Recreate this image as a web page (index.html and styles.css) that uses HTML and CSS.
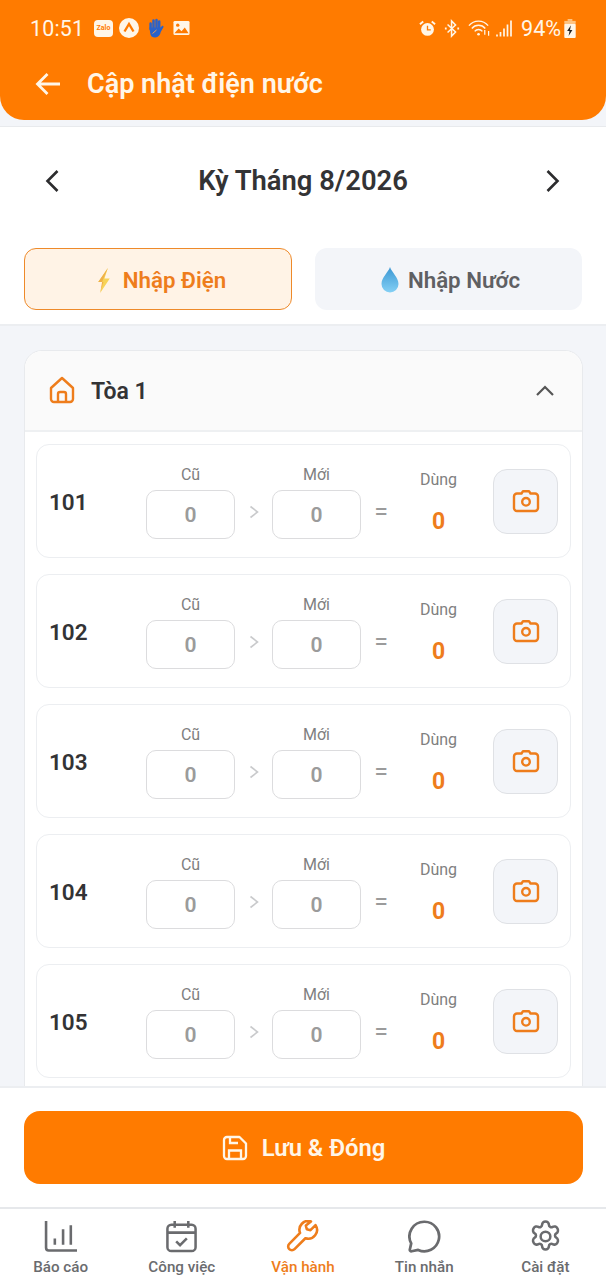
FILE: index.html
```html
<!DOCTYPE html>
<html lang="vi">
<head>
<meta charset="utf-8">
<title>Cập nhật điện nước</title>
<link rel="stylesheet" href="styles.css">
</head>
<body>
<svg class="defs" width="0" height="0" aria-hidden="true">
  <symbol id="cam" viewBox="0 0 28 24"><path d="M9.500 4.500 11 2.200h6l1.500 2.300H23a3 3 0 0 1 3 3v11.500a3 3 0 0 1-3 3H5a3 3 0 0 1-3-3V7.500a3 3 0 0 1 3-3z" fill="none" stroke="currentColor" stroke-width="2.400" stroke-linejoin="round"/><circle cx="14" cy="12.800" r="3.800" fill="none" stroke="currentColor" stroke-width="2.400"/></symbol>
  <symbol id="chev" viewBox="0 0 10 14"><path d="M1.500 1.500 8.500 7l-7 5.500" fill="none" stroke="#c9cacc" stroke-width="1.600"/></symbol>
</svg>
<header class="appbar">
  <div class="status">
    <span class="time">10:51</span>
    <span class="notif">
      <span class="zalo">Zalo</span>
      <svg class="ic-a" viewBox="0 0 20 20"><circle cx="10" cy="10" r="10" fill="#fff6e8"/><path d="M5.500 13.500 10 6l4.500 7.500" fill="none" stroke="#ff7a00" stroke-width="2.400"/></svg>
      <svg class="ic-hand" viewBox="0 0 17 20"><path d="M3.600 5.500V11M6.500 2.500V10M9.500 2V10M12.200 3.500V11" stroke="#2a62c9" stroke-width="2.500" stroke-linecap="round"/><path d="M2.500 9.500h11l2-2 1.200 1.200-3 5.300a6.500 6.500 0 0 1-5.500 5.500 5 5 0 0 1-5-4.500z" fill="#2a62c9"/><path d="M5.500 15.500 9.500 12" stroke="#f09a50" stroke-width="1"/></svg>
      <svg class="ic-pic" viewBox="0 0 18 16"><rect x=".5" y=".5" width="17" height="15" rx="1.500" fill="#fff6e8"/><circle cx="5" cy="5" r="1.800" fill="#ff7a00"/><path d="M1.500 13.500 6 8.500l3 3 3.500-4 4 6z" fill="#ff7a00"/></svg>
    </span>
    <span class="sysicons">
      <svg class="ic-alarm" viewBox="0 0 18 18"><circle cx="9" cy="10" r="6.800" fill="#fff6e8"/><path d="M9 6v4.500h3.500" fill="none" stroke="#ff7a00" stroke-width="1.400"/><path d="M1 4.500 4.500 1.500M17 4.500 13.500 1.500" stroke="#fff6e8" stroke-width="2"/></svg>
      <svg class="ic-bt" viewBox="0 0 18 20"><path d="M4 5.500 13 14l-4.500 4.500v-17L13 6l-9 8.500" fill="none" stroke="#fff6e8" stroke-width="1.700"/><path d="M1 10h2M15 10h2" stroke="#fff6e8" stroke-width="2"/></svg>
      <svg class="ic-wifi" viewBox="0 0 24 18"><path d="M1 6.500a13 13 0 0 1 20 0M4 9.500a9 9 0 0 1 14 0M7 12.500a5 5 0 0 1 8 0" fill="none" stroke="#fff6e8" stroke-width="1.500"/><circle cx="11" cy="15.500" r="1.400" fill="#fff6e8"/><path d="M17.500 11v5M21.500 17v-5" stroke="#fff6e8" stroke-width="1.300"/></svg>
      <svg class="ic-signal" viewBox="0 0 16 17"><path d="M1 14.500v2M4.500 12v4.500M8 8.500v8M11.500 4.500v12M15 .5v16" stroke="#fff6e8" stroke-width="1.700"/></svg>
      <span class="batt">94%</span>
      <svg class="ic-batt" viewBox="0 0 12 20"><rect x="3.500" y="0" width="5" height="2" fill="#ffc480"/><rect x="0" y="2" width="12" height="3" fill="#ffc480"/><rect x="0" y="5" width="12" height="15" rx="1" fill="#fff6e8"/><path d="M7 6.500 3 12.500h2.500L4.500 18l4-6.500H6z" fill="#222"/></svg>
    </span>
  </div>
  <div class="titlebar">
    <svg class="back" viewBox="0 0 28 28"><path d="M26 14H4M13.500 4 3.500 14l10 10" fill="none" stroke="#fff6e8" stroke-width="2.800"/></svg>
    <h1>Cập nhật điện nước</h1>
  </div>
</header>

<section class="top">
  <div class="period">
    <svg class="nav" viewBox="0 0 24 24"><path d="M16.500 2 6.500 12l10 10" fill="none" stroke="#2c2c2e" stroke-width="2.600"/></svg>
    <h2>Kỳ Tháng 8/2026</h2>
    <svg class="nav" viewBox="0 0 24 24"><path d="M6.500 2l10 10-10 10" fill="none" stroke="#2c2c2e" stroke-width="2.600"/></svg>
  </div>
  <div class="tabs">
    <button class="tab tab-on">
      <svg class="bolt" viewBox="0 0 16 26"><path d="M12 0 2 14.500h5L4 26l10-15H8.500z" fill="#f7d358"/><path d="M12 0 6 14.500 4 26l3.500-11.500H2z" fill="#efb04a"/></svg>
      Nhập Điện
    </button>
    <button class="tab">
      <svg class="drop" viewBox="0 0 18 26"><defs><linearGradient id="dg" x1="0" y1="0" x2="0" y2="1"><stop offset="0" stop-color="#3b97d3"/><stop offset="1" stop-color="#84d0f5"/></linearGradient></defs><path d="M9 0c1.500 5 8.500 10.500 8.500 17a8.500 8.500 0 0 1-17 0C.5 10.500 7.500 5 9 0z" fill="url(#dg)"/></svg>
      Nhập Nước
    </button>
  </div>
</section>

<main class="content">
  <div class="card">
    <div class="card-head">
      <svg class="home" viewBox="0 0 26 28"><path d="M2 12 13 2l11 10v11a3 3 0 0 1-3 3H5a3 3 0 0 1-3-3z" fill="none" stroke="#ee7d1c" stroke-width="2.400" stroke-linejoin="round"/><path d="M9 26v-8a2 2 0 0 1 2-2h4a2 2 0 0 1 2 2v8" fill="none" stroke="#ee7d1c" stroke-width="2.400"/></svg>
      <span class="building">Tòa 1</span>
      <svg class="collapse" viewBox="0 0 20 12"><path d="M2 10.500 10 2.500l8 8" fill="none" stroke="#555" stroke-width="2.200"/></svg>
    </div>
    <div class="rows">
      <div class="row">
        <span class="room">101</span>
        <div class="field"><span class="lbl">Cũ</span><div class="input">0</div></div>
        <svg class="chev"><use href="#chev"/></svg>
        <div class="field"><span class="lbl">Mới</span><div class="input">0</div></div>
        <span class="eq">=</span>
        <div class="used"><span class="lbl">Dùng</span><b>0</b></div>
        <div class="camera"><svg viewBox="0 0 28 24"><use href="#cam"/></svg></div>
      </div>
      <div class="row">
        <span class="room">102</span>
        <div class="field"><span class="lbl">Cũ</span><div class="input">0</div></div>
        <svg class="chev"><use href="#chev"/></svg>
        <div class="field"><span class="lbl">Mới</span><div class="input">0</div></div>
        <span class="eq">=</span>
        <div class="used"><span class="lbl">Dùng</span><b>0</b></div>
        <div class="camera"><svg viewBox="0 0 28 24"><use href="#cam"/></svg></div>
      </div>
      <div class="row">
        <span class="room">103</span>
        <div class="field"><span class="lbl">Cũ</span><div class="input">0</div></div>
        <svg class="chev"><use href="#chev"/></svg>
        <div class="field"><span class="lbl">Mới</span><div class="input">0</div></div>
        <span class="eq">=</span>
        <div class="used"><span class="lbl">Dùng</span><b>0</b></div>
        <div class="camera"><svg viewBox="0 0 28 24"><use href="#cam"/></svg></div>
      </div>
      <div class="row">
        <span class="room">104</span>
        <div class="field"><span class="lbl">Cũ</span><div class="input">0</div></div>
        <svg class="chev"><use href="#chev"/></svg>
        <div class="field"><span class="lbl">Mới</span><div class="input">0</div></div>
        <span class="eq">=</span>
        <div class="used"><span class="lbl">Dùng</span><b>0</b></div>
        <div class="camera"><svg viewBox="0 0 28 24"><use href="#cam"/></svg></div>
      </div>
      <div class="row">
        <span class="room">105</span>
        <div class="field"><span class="lbl">Cũ</span><div class="input">0</div></div>
        <svg class="chev"><use href="#chev"/></svg>
        <div class="field"><span class="lbl">Mới</span><div class="input">0</div></div>
        <span class="eq">=</span>
        <div class="used"><span class="lbl">Dùng</span><b>0</b></div>
        <div class="camera"><svg viewBox="0 0 28 24"><use href="#cam"/></svg></div>
      </div>
    </div>
  </div>
</main>

<div class="savebar">
  <button class="save">
    <svg viewBox="0 0 26 26"><path d="M2 5a3 3 0 0 1 3-3h12.500L24 8.500V21a3 3 0 0 1-3 3H5a3 3 0 0 1-3-3z" fill="none" stroke="#fff6e8" stroke-width="2.300" stroke-linejoin="round"/><path d="M7 24v-8.500h12V24M8 2v6h8" fill="none" stroke="#fff6e8" stroke-width="2.300"/></svg>
    Lưu &amp; Đóng
  </button>
</div>

<nav class="tabbar">
  <div class="item">
    <svg viewBox="0 0 32 32"><path d="M2 1v26a2.500 2.500 0 0 0 2.500 2.500H32" fill="none" stroke="currentColor" stroke-width="2.500"/><path d="M10.500 18v6M18.500 9v15M26 5v19" stroke="currentColor" stroke-width="2.500"/></svg>
    <span>Báo cáo</span>
  </div>
  <div class="item">
    <svg viewBox="0 0 32 34"><rect x="1.500" y="5" width="29" height="27" rx="4" fill="none" stroke="currentColor" stroke-width="2.600"/><path d="M2 13h28M9 1v7M23 1v7" stroke="currentColor" stroke-width="2.600"/><path d="M10.500 22l4 4 7-7" fill="none" stroke="currentColor" stroke-width="2.600"/></svg>
    <span>Công việc</span>
  </div>
  <div class="item item-on">
    <svg viewBox="0 0 34 34"><path d="M31 4.500l-5.500 5.500-4-1-1-4L26 .5a9.500 9.500 0 0 0-11.800 12.500L2.500 24.800a4 4 0 0 0 0 5.700 4 4 0 0 0 5.700 0L20 18.700A9.500 9.500 0 0 0 31 4.500z" transform="translate(1 1) scale(.95)" fill="none" stroke="currentColor" stroke-width="2.800" stroke-linejoin="round"/></svg>
    <span>Vận hành</span>
  </div>
  <div class="item">
    <svg viewBox="0 0 34 34"><path d="M17 1.800a15.200 15.200 0 1 1-6.500 29l-6.800 1.400a1.500 1.500 0 0 1-1.800-1.800l1.400-6.300A15.200 15.200 0 0 1 17 1.800z" fill="none" stroke="currentColor" stroke-width="2.800" stroke-linejoin="round"/></svg>
    <span>Tin nhắn</span>
  </div>
  <div class="item">
    <svg viewBox="0 0 32 34"><path d="M12.500 3.500a3.500 3.500 0 0 1 7 0 2.500 2.500 0 0 0 3.800 2.100 3.500 3.500 0 0 1 4.800 1.300l.3.600a3.500 3.500 0 0 1-1.300 4.800 2.500 2.500 0 0 0 0 4.400 3.500 3.500 0 0 1 1.300 4.800l-.3.600a3.500 3.500 0 0 1-4.800 1.300 2.500 2.500 0 0 0-3.800 2.100 3.500 3.500 0 0 1-7 0 2.500 2.500 0 0 0-3.800-2.100 3.500 3.500 0 0 1-4.800-1.300l-.3-.6a3.500 3.500 0 0 1 1.300-4.800 2.500 2.500 0 0 0 0-4.400 3.500 3.500 0 0 1-1.300-4.800l.3-.6a3.500 3.500 0 0 1 4.800-1.300 2.500 2.500 0 0 0 3.800-2.100z" transform="translate(0 1.500)" fill="none" stroke="currentColor" stroke-width="2.600"/><circle cx="16" cy="17" r="5" fill="none" stroke="currentColor" stroke-width="2.600"/></svg>
    <span>Cài đặt</span>
  </div>
</nav>
</body>
</html>
```

FILE: styles.css
```css
* { box-sizing: border-box; }
html, body { margin: 0; padding: 0; }
body {
  width: 606px;
  height: 1280px;
  overflow: hidden;
  display: flex;
  flex-direction: column;
  background: #f3f5f9;
  font-family: Roboto, "Liberation Sans", sans-serif;
  color: #333335;
}
.defs { position: absolute; }
svg { display: block; flex: none; }

.appbar {
  height: 120px;
  background: #ff7b00;
  border-radius: 0 0 24px 24px;
  color: #fff6e8;
  flex: none;
  padding-top: 13px;
}
.status {
  display: flex;
  align-items: center;
  height: 30px;
  padding: 0 30px;
}
.time { font-size: 21.400px; width: 64px; letter-spacing: .2px; }
.notif { display: flex; align-items: center; }
.zalo {
  width: 19px;
  height: 17px;
  border-radius: 4px;
  background: #fff6e8;
  color: #ff7b00;
  font-size: 7px;
  font-weight: 700;
  text-align: center;
  line-height: 16px;
}
.ic-a { width: 20px; height: 20px; margin-left: 6px; }
.ic-hand { width: 17px; height: 20px; margin-left: 8px; }
.ic-pic { width: 17px; height: 16px; margin-left: 9px; }
.sysicons { margin-left: auto; display: flex; align-items: center; }
.ic-alarm { width: 17px; height: 17px; margin-right: 8px; }
.ic-bt { width: 16px; height: 19px; margin-right: 8px; }
.ic-wifi { width: 23px; height: 18px; margin-right: 5px; }
.ic-signal { width: 16px; height: 17px; margin-right: 9px; }
.batt { font-size: 21.600px; width: 40px; white-space: nowrap; }
.ic-batt { width: 12px; height: 19px; margin-left: 3px; }

.titlebar { display: flex; align-items: center; height: 40px; margin-top: 21px; padding-left: 34px; }
.back { width: 28px; height: 28px; }
h1 { margin: 0 0 0 25px; font-size: 27px; font-weight: 600; color: #fff6e8; }

.top {
  flex: none;
  margin-top: 6px;
  height: 200px;
  background: #fff;
  border-top: 1px solid #e8eaed;
  border-bottom: 2px solid #eceef1;
  padding: 0 24px;
}
.period {
  display: flex;
  align-items: center;
  justify-content: space-between;
  height: 56px;
  margin: 26px 17px 0 17px;
}
.nav { width: 24px; height: 24px; }
h2 { margin: 0; font-size: 27.400px; font-weight: 600; color: #333335; }
.tabs { display: flex; gap: 23px; margin-top: 39px; }
.tab {
  flex: 1;
  height: 62px;
  display: flex;
  align-items: center;
  justify-content: center;
  gap: 9px;
  border: 0;
  border-radius: 12px;
  background: #f3f5f9;
  color: #5f6063;
  font: 600 22.300px Roboto, sans-serif;
  padding: 2px 0 0 4px;
}
.tab-on {
  flex: 0 0 268px;
  background: #fff3e6;
  border: 1.500px solid #ee8a2a;
  color: #ee7d1c;
  gap: 11px;
  padding-left: 6px;
}
.bolt { width: 16px; height: 25px; }
.drop { width: 18px; height: 26px; }

.content { flex: 1; min-height: 0; overflow: hidden; padding: 24px 23px 0 24px; }
.card {
  background: #fff;
  border: 1px solid #e8eaed;
  border-radius: 18px 18px 0 0;
  min-height: 800px;
}
.card-head {
  display: flex;
  align-items: center;
  height: 81px;
  padding: 0 27px 0 24px;
  background: #fafafa;
  border-bottom: 2px solid #eef0f2;
  border-radius: 18px 18px 0 0;
}
.home { width: 26px; height: 28px; margin-top: -1px; }
.building { font-size: 23px; font-weight: 600; margin: 2px 0 0 16px; color: #333335; }
.collapse { width: 20px; height: 13px; margin-left: auto; }

.rows { display: flex; flex-direction: column; gap: 16px; padding: 12px 11px 0 11px; }
.row {
  height: 114px;
  display: flex;
  align-items: center;
  padding: 0 12px 0 12px;
  background: #fff;
  border: 1.500px solid #eceef1;
  border-radius: 13px;
}
.room { width: 97px; font-size: 22.500px; font-weight: 600; color: #333335; margin-top: 1px; }
.field { width: 89px; display: flex; flex-direction: column; align-items: center; gap: 5px; margin-top: 2px; }
.lbl { font-size: 16px; line-height: 20px; color: #808080; }
.input {
  width: 89px;
  height: 49px;
  border: 1.500px solid #dcdcde;
  border-radius: 10px;
  display: flex;
  align-items: center;
  justify-content: center;
  font-size: 21px;
  font-weight: 600;
  color: #9b9b9b;
}
.chev { width: 10px; height: 14px; margin: 22px 13.500px 0; }
.eq { width: 40px; text-align: center; font-size: 25px; color: #9b9b9b; margin-top: 22px; line-height: 24px; }
.used { width: 75px; display: flex; flex-direction: column; align-items: center; gap: 19px; margin-top: 2px; }
.used b { font-size: 23px; line-height: 26px; font-weight: 700; color: #ee7d1c; }
.camera {
  width: 65px;
  height: 65px;
  margin-left: auto;
  background: #f3f5f9;
  border: 1.500px solid #dfe1e5;
  border-radius: 14px;
  display: flex;
  align-items: center;
  justify-content: center;
  color: #ee7d1c;
}
.camera svg { width: 28px; height: 24px; }

.savebar {
  flex: none;
  height: 121px;
  background: #fff;
  border-top: 2px solid #eceef1;
  padding: 23px 23px 0 24px;
}
.save {
  width: 100%;
  height: 73px;
  border: 0;
  border-radius: 16px;
  background: #ff7b00;
  color: #fff6e8;
  font: 600 23.800px Roboto, sans-serif;
  display: flex;
  align-items: center;
  justify-content: center;
  gap: 14px;
  padding: 0;
}
.save svg { width: 26px; height: 26px; }

.tabbar {
  flex: none;
  height: 73px;
  background: #fff;
  border-top: 2px solid #e6e8eb;
  display: grid;
  grid-template-columns: repeat(5, 1fr);
}
.item {
  display: flex;
  flex-direction: column;
  align-items: center;
  color: #6a6b6e;
  font-size: 15.200px;
  padding-top: 11px;
}
.item svg { width: 33px; height: 33px; }
.item span { margin-top: 5px; font-weight: 500; line-height: 18px; }
.item-on { color: #ee7d1c; }
```
